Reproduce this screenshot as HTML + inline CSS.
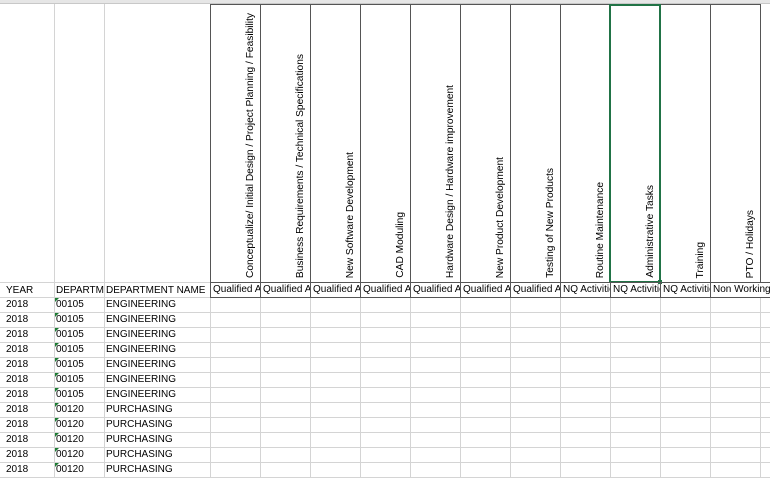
<!DOCTYPE html>
<html><head><meta charset="utf-8"><style>
*{margin:0;padding:0;box-sizing:border-box}
body{width:770px;height:477px;overflow:hidden;background:#fff;font-family:"Liberation Sans",Arial,sans-serif;font-size:10px;color:#000;position:relative}
.a{position:absolute}
.top{left:0;top:0;width:770px;height:4px;background:#e6e6e6;border-bottom:1px solid #c8c8c8}
.vl{position:absolute;width:1px;background:#d4d4d4}
.hl{position:absolute;height:1px;background:#d4d4d4;left:0;width:770px}
.hc{position:absolute;top:4px;height:279px;width:51px;border:1px solid #555;overflow:hidden}
.rt{position:absolute;bottom:4px;left:34px;writing-mode:vertical-rl;transform:rotate(180deg);font-size:10.2px;letter-spacing:0;white-space:nowrap}
.lc{position:absolute;top:282px;height:16px;width:51px;border:1px solid #555;padding-left:2px;line-height:14px;white-space:nowrap;overflow:hidden;font-size:10px}
.t{position:absolute;font-size:10px;line-height:15px;white-space:nowrap}
.tri{position:absolute;width:0;height:0;border-top:4px solid #1e7b34;border-right:4px solid transparent}
</style></head><body>
<div class="a top"></div>
<div class="vl" style="left:54px;top:4px;height:473px"></div>
<div class="vl" style="left:104px;top:4px;height:473px"></div>
<div class="vl" style="left:210px;top:4px;height:473px"></div>
<div class="vl" style="left:260px;top:297px;height:180px"></div>
<div class="vl" style="left:310px;top:297px;height:180px"></div>
<div class="vl" style="left:360px;top:297px;height:180px"></div>
<div class="vl" style="left:410px;top:297px;height:180px"></div>
<div class="vl" style="left:460px;top:297px;height:180px"></div>
<div class="vl" style="left:510px;top:297px;height:180px"></div>
<div class="vl" style="left:560px;top:297px;height:180px"></div>
<div class="vl" style="left:610px;top:297px;height:180px"></div>
<div class="vl" style="left:660px;top:297px;height:180px"></div>
<div class="vl" style="left:710px;top:297px;height:180px"></div>
<div class="vl" style="left:760px;top:297px;height:180px"></div>
<div class="hl" style="top:282px;width:210px"></div>
<div class="hl" style="top:297px"></div>
<div class="hl" style="top:312px"></div>
<div class="hl" style="top:327px"></div>
<div class="hl" style="top:342px"></div>
<div class="hl" style="top:357px"></div>
<div class="hl" style="top:372px"></div>
<div class="hl" style="top:387px"></div>
<div class="hl" style="top:402px"></div>
<div class="hl" style="top:417px"></div>
<div class="hl" style="top:432px"></div>
<div class="hl" style="top:447px"></div>
<div class="hl" style="top:462px"></div>
<div class="hl" style="top:477px"></div>

<div class="hc" style="left:210px"><div class="rt">Conceptualize/ Initial Design / Project Planning / Feasibility</div></div>
<div class="hc" style="left:260px"><div class="rt">Business Requirements / Technical Specifications</div></div>
<div class="hc" style="left:310px"><div class="rt">New Software Development</div></div>
<div class="hc" style="left:360px"><div class="rt">CAD Moduling</div></div>
<div class="hc" style="left:410px"><div class="rt">Hardware Design / Hardware improvement</div></div>
<div class="hc" style="left:460px"><div class="rt">New Product Development</div></div>
<div class="hc" style="left:510px"><div class="rt">Testing of New Products</div></div>
<div class="hc" style="left:560px"><div class="rt">Routine Maintenance</div></div>
<div class="hc" style="left:610px"><div class="rt">Administrative Tasks</div></div>
<div class="hc" style="left:660px"><div class="rt">Training</div></div>
<div class="hc" style="left:710px"><div class="rt">PTO / Holidays</div></div>
<div class="a" style="left:609px;top:4px;width:52px;height:279px;border:2px solid #217346"></div>
<div class="a" style="left:658px;top:280px;width:4px;height:4px;background:#217346"></div>

<div class="t" style="left:6px;top:283px">YEAR</div>
<div class="t" style="left:56px;top:283px;width:48px;overflow:hidden">DEPARTMENT</div>
<div class="t" style="left:106px;top:283px">DEPARTMENT NAME</div>
<div class="lc" style="left:210px">Qualified Activities</div>
<div class="lc" style="left:260px">Qualified Activities</div>
<div class="lc" style="left:310px">Qualified Activities</div>
<div class="lc" style="left:360px">Qualified Activities</div>
<div class="lc" style="left:410px">Qualified Activities</div>
<div class="lc" style="left:460px">Qualified Activities</div>
<div class="lc" style="left:510px">Qualified Activities</div>
<div class="lc" style="left:560px">NQ Activities</div>
<div class="lc" style="left:610px">NQ Activities</div>
<div class="lc" style="left:660px">NQ Activities</div>
<div class="lc" style="left:710px;width:60px;border-right:none">Non Working</div>

<div class="t" style="left:6px;top:297px">2018</div><div class="tri" style="left:55px;top:298px"></div><div class="t" style="left:56px;top:297px">00105</div><div class="t" style="left:106px;top:297px">ENGINEERING</div>
<div class="t" style="left:6px;top:312px">2018</div><div class="tri" style="left:55px;top:313px"></div><div class="t" style="left:56px;top:312px">00105</div><div class="t" style="left:106px;top:312px">ENGINEERING</div>
<div class="t" style="left:6px;top:327px">2018</div><div class="tri" style="left:55px;top:328px"></div><div class="t" style="left:56px;top:327px">00105</div><div class="t" style="left:106px;top:327px">ENGINEERING</div>
<div class="t" style="left:6px;top:342px">2018</div><div class="tri" style="left:55px;top:343px"></div><div class="t" style="left:56px;top:342px">00105</div><div class="t" style="left:106px;top:342px">ENGINEERING</div>
<div class="t" style="left:6px;top:357px">2018</div><div class="tri" style="left:55px;top:358px"></div><div class="t" style="left:56px;top:357px">00105</div><div class="t" style="left:106px;top:357px">ENGINEERING</div>
<div class="t" style="left:6px;top:372px">2018</div><div class="tri" style="left:55px;top:373px"></div><div class="t" style="left:56px;top:372px">00105</div><div class="t" style="left:106px;top:372px">ENGINEERING</div>
<div class="t" style="left:6px;top:387px">2018</div><div class="tri" style="left:55px;top:388px"></div><div class="t" style="left:56px;top:387px">00105</div><div class="t" style="left:106px;top:387px">ENGINEERING</div>
<div class="t" style="left:6px;top:402px">2018</div><div class="tri" style="left:55px;top:403px"></div><div class="t" style="left:56px;top:402px">00120</div><div class="t" style="left:106px;top:402px">PURCHASING</div>
<div class="t" style="left:6px;top:417px">2018</div><div class="tri" style="left:55px;top:418px"></div><div class="t" style="left:56px;top:417px">00120</div><div class="t" style="left:106px;top:417px">PURCHASING</div>
<div class="t" style="left:6px;top:432px">2018</div><div class="tri" style="left:55px;top:433px"></div><div class="t" style="left:56px;top:432px">00120</div><div class="t" style="left:106px;top:432px">PURCHASING</div>
<div class="t" style="left:6px;top:447px">2018</div><div class="tri" style="left:55px;top:448px"></div><div class="t" style="left:56px;top:447px">00120</div><div class="t" style="left:106px;top:447px">PURCHASING</div>
<div class="t" style="left:6px;top:462px">2018</div><div class="tri" style="left:55px;top:463px"></div><div class="t" style="left:56px;top:462px">00120</div><div class="t" style="left:106px;top:462px">PURCHASING</div>
</body></html>
